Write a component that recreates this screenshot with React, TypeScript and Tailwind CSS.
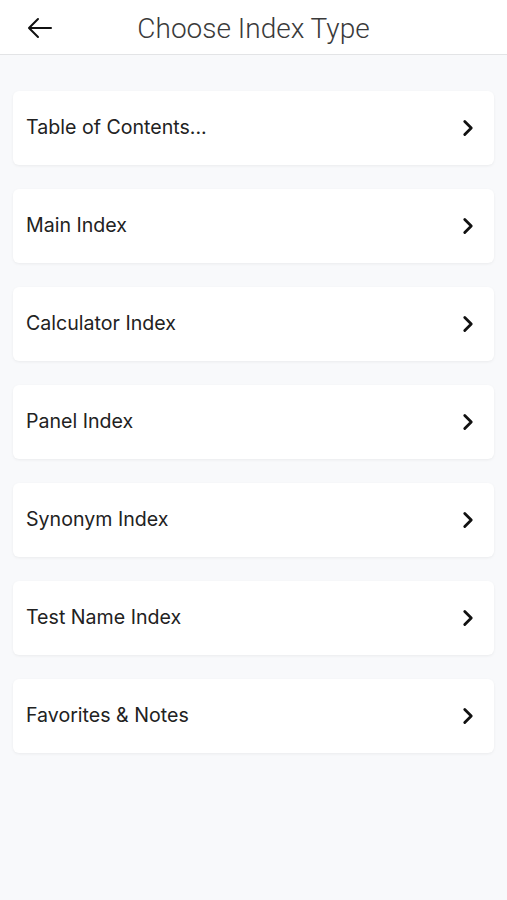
import { ChevronRight } from 'lucide-react';

const items = [
  'Table of Contents...',
  'Main Index',
  'Calculator Index',
  'Panel Index',
  'Synonym Index',
  'Test Name Index',
  'Favorites & Notes',
];

export default function App() {
  return (
    <div className="min-h-[900px] bg-[#f8f9fb] font-['Inter','Liberation_Sans',sans-serif]">
      <header className="relative flex h-[55px] items-center justify-center border-b border-[#e3e4e6] bg-white">
        <button type="button" className="absolute left-[26px] top-[14px] text-[#111]" aria-label="Back">
          <svg width="28" height="28" viewBox="0 0 28 28" fill="none" stroke="currentColor" strokeWidth="2" strokeLinecap="round" strokeLinejoin="round">
            <path d="M25 14H4" />
            <path d="M12 5l-9 9 9 9" />
          </svg>
        </button>
        <h1 className="pt-[3px] font-['Roboto',sans-serif] text-[28px] font-light text-[#3a3a3a]">Choose Index Type</h1>
      </header>

      <ul className="flex flex-col gap-6 px-[13px] pt-9">
        {items.map((item) => (
          <li key={item}>
            <button
              type="button"
              className="flex h-[74px] w-full items-center justify-between rounded-[6px] bg-white pl-[13px] pr-[13px] text-left shadow-[0_1px_3px_rgba(0,0,0,0.06)]"
            >
              <span className="text-[19.6px] text-[#222]">{item}</span>
              <ChevronRight size={26} strokeWidth={2.6} className="text-[#111]" />
            </button>
          </li>
        ))}
      </ul>
    </div>
  );
}
